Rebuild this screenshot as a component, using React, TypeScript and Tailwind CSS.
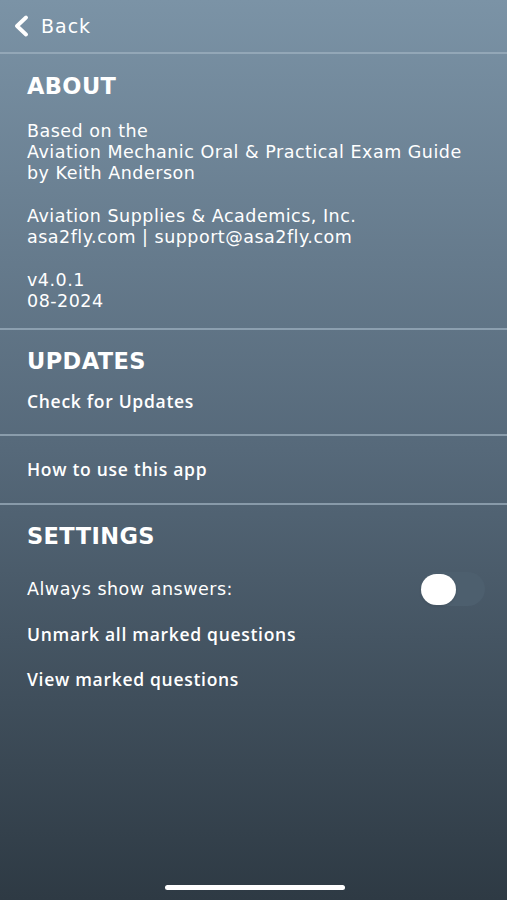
const Divider = () => <div className="h-[2px] bg-[#9fb2c1]/70" />;

const body = { fontFamily: '"DejaVu Sans", Verdana, sans-serif' };
const semi = { fontFamily: '"Open Sans", Arial, sans-serif' };

const Heading = ({ children }: { children: string }) => (
  <h2 className="text-[22.5px] font-bold leading-[28px] tracking-[0.4px]" style={body}>
    {children}
  </h2>
);

const Row = ({ children, className = "" }: { children: string; className?: string }) => (
  <p className={`text-[17.5px] font-semibold leading-[21px] tracking-[0.7px] ${className}`} style={semi}>
    {children}
  </p>
);

export default function App() {
  return (
    <main
      className="w-[507px] h-[900px] flex flex-col text-white bg-gradient-to-b from-[#7b93a6] via-[#56697a] to-[#2e3a44] relative overflow-hidden"
      style={body}
    >
      <header className="h-[52px] flex items-center pl-[13px] gap-[12px]">
        <svg width="16" height="22" viewBox="0 0 16 22" fill="none">
          <path d="M13 2.5 L4 11 L13 19.5" stroke="white" strokeWidth="3.8" strokeLinecap="round" strokeLinejoin="round" />
        </svg>
        <span className="text-[19px] tracking-[1px]">Back</span>
      </header>
      <Divider />

      <section className="px-[27px] pt-[18px] pb-[16px]">
        <Heading>ABOUT</Heading>
        <div className="mt-[21px] text-[17.5px] leading-[21px] tracking-[0.5px] flex flex-col gap-[22px]">
          <p>
            Based on the
            <br />
            Aviation Mechanic Oral &amp; Practical Exam Guide
            <br />
            by Keith Anderson
          </p>
          <p>
            Aviation Supplies &amp; Academics, Inc.
            <br />
            asa2fly.com | support@asa2fly.com
          </p>
          <p>
            v4.0.1
            <br />
            08-2024
          </p>
        </div>
      </section>
      <Divider />

      <section className="px-[27px] pt-[17px] pb-[22px]">
        <Heading>UPDATES</Heading>
        <Row className="mt-[16px]">Check for Updates</Row>
      </section>
      <Divider />

      <section className="px-[27px] h-[67px] flex items-center">
        <Row>How to use this app</Row>
      </section>
      <Divider />

      <section className="px-[27px] pt-[17px]">
        <Heading>SETTINGS</Heading>
        <div className="mt-[22px] flex items-center justify-between">
          <span className="text-[17.5px] leading-[21px] tracking-[0.5px]">Always show answers:</span>
          <div className="w-[65px] h-[34px] rounded-full bg-[#4d5f6e] flex items-center pl-[1px] mr-[-5px]">
            <div className="w-[35px] h-[31px] rounded-full bg-white shadow" />
          </div>
        </div>
        <Row className="mt-[18px]">Unmark all marked questions</Row>
        <Row className="mt-[24px]">View marked questions</Row>
      </section>

      <div className="absolute left-[165px] bottom-[10px] w-[180px] h-[5px] rounded-full bg-white" />
    </main>
  );
}
